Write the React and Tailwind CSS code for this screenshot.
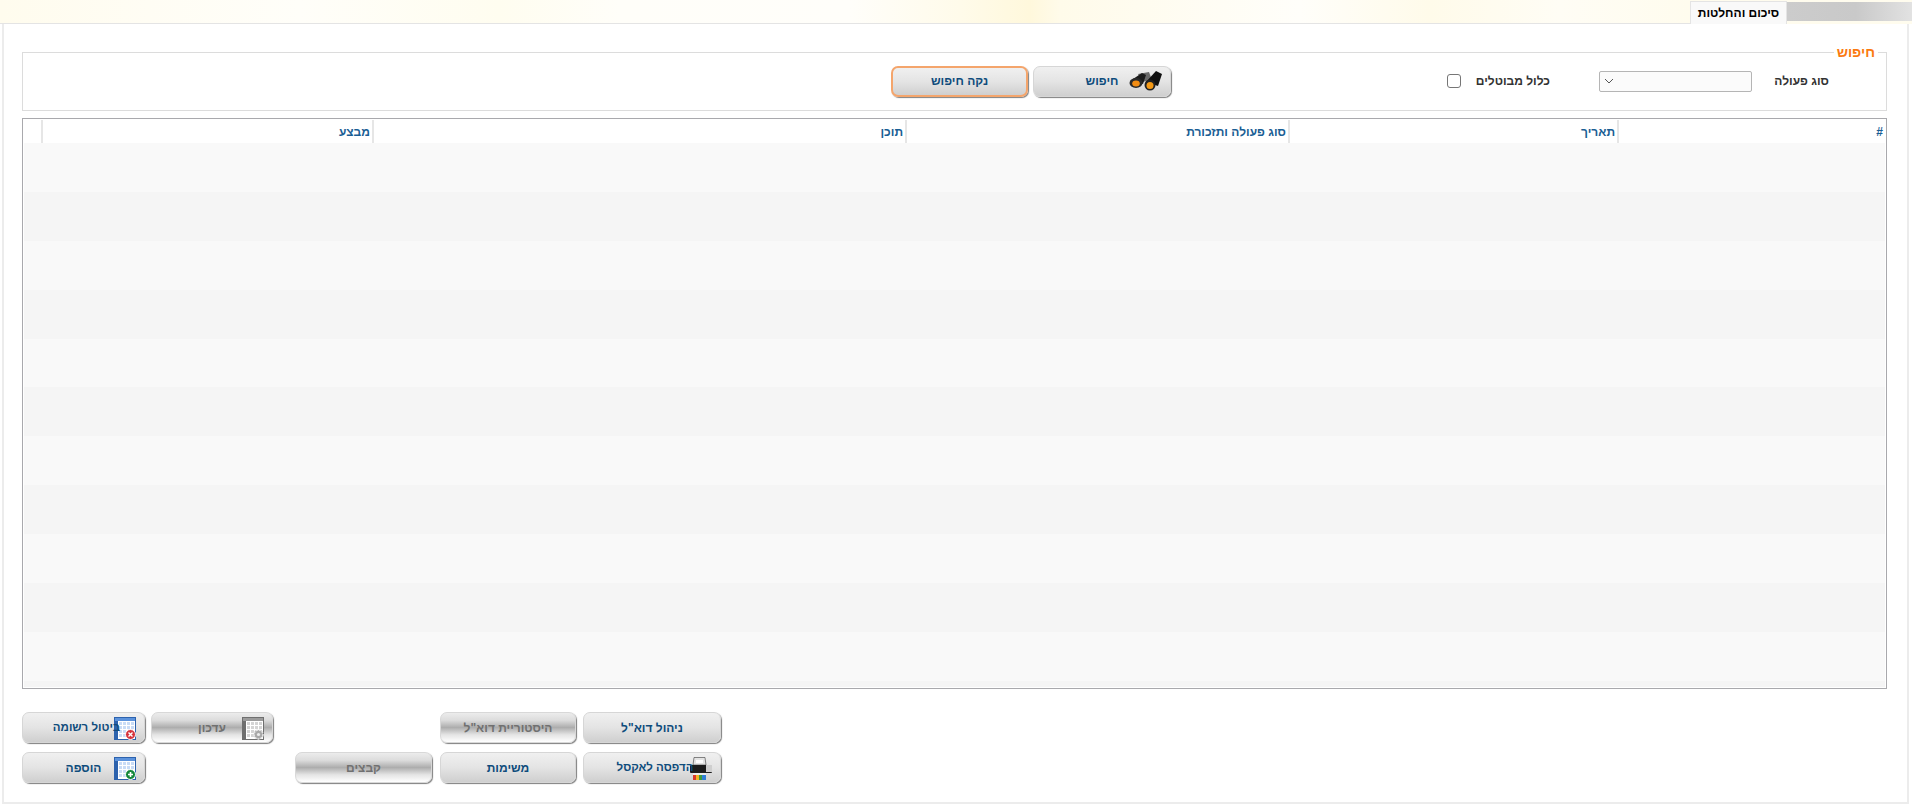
import React from 'react';

const rows = [0, 1, 2, 3, 4, 5, 6, 7, 8, 9, 10, 11];

const columns = [
  { title: '#', width: 'w-[268px]' },
  { title: 'תאריך', width: 'w-[329px]' },
  { title: 'סוג פעולה ותזכורת', width: 'w-[383px]' },
  { title: 'תוכן', width: 'w-[533px]' },
  { title: 'מבצע', width: 'w-[331px]' },
];

const Binoculars = () => (
  <svg width="33" height="20" viewBox="0 0 33 20" className="block">
    <path d="M9 3 L20 1 L23 9 L13 11 Z" fill="#6a6a6a" />
    <path d="M1 10 L13 2 L17 4 L14 13 Z" fill="#1c1c1c" />
    <path d="M17 11 L27 0 L33 3 L29 15 Z" fill="#111111" />
    <ellipse cx="7" cy="12" rx="6.5" ry="5" fill="#2a2a2a" />
    <ellipse cx="7" cy="12.5" rx="3.8" ry="3" fill="#f28c12" />
    <circle cx="21" cy="14" r="5.5" fill="#222222" />
    <circle cx="21" cy="14.5" r="3.5" fill="#f59a16" />
  </svg>
);

const GridIcon = ({ badge, muted }) => {
  const frame = muted ? '#6f6f6f' : '#2d62ad';
  const head = muted ? '#9b9b9b' : '#5c93dc';
  const cell = muted ? '#d4d4d4' : '#c9dcf6';
  return (
    <svg width="22" height="23" viewBox="0 0 22 23" className="block">
      <rect x="0.5" y="0.5" width="21" height="22" fill="#ffffff" stroke={frame} />
      <rect x="1" y="1" width="20" height="3" fill={head} />
      <rect x="1" y="4" width="3" height="18" fill={frame} />
      {[5, 9, 13, 17].map((x) =>
        [5, 9, 13, 17].map((y) => <rect key={`${x}-${y}`} x={x} y={y} width="3" height="3" fill={cell} />)
      )}
      {badge === 'remove' && (
        <>
          <circle cx="16.5" cy="17.5" r="5" fill="#d6343d" stroke="#ffffff" />
          <path d="M14.5 15.5 L18.5 19.5 M18.5 15.5 L14.5 19.5" stroke="#ffffff" strokeWidth="1.4" />
        </>
      )}
      {badge === 'add' && (
        <>
          <circle cx="16.5" cy="17.5" r="5" fill="#14873a" stroke="#ffffff" />
          <path d="M14 17.5 H19 M16.5 15 V20" stroke="#ffffff" strokeWidth="1.6" />
        </>
      )}
      {badge === 'gear' && (
        <>
          <circle cx="16.5" cy="17.5" r="4.5" fill="#a8a8a8" stroke="#e6e6e6" strokeWidth="1.5" strokeDasharray="2 1" />
          <circle cx="16.5" cy="17.5" r="1.6" fill="#ececec" />
        </>
      )}
    </svg>
  );
};

const Printer = () => (
  <svg width="25" height="23" viewBox="0 0 25 23" className="block">
    <path d="M7 0.5 H18 L19 8 H6 Z" fill="#e4e4e4" stroke="#555555" strokeWidth="0.7" />
    <rect x="9" y="3" width="7" height="3" fill="#ffffff" />
    <rect x="3" y="8" width="22" height="8" rx="1" fill="#1d1d1d" />
    <rect x="19" y="8" width="6" height="7" fill="#cfcfcf" />
    <rect x="6" y="16" width="13" height="7" fill="#eeeeee" />
    <rect x="6" y="18" width="3" height="5" fill="#d93a2b" />
    <rect x="9" y="18" width="3" height="5" fill="#f3b521" />
    <rect x="12" y="18" width="3" height="5" fill="#3f9b3f" />
    <rect x="15" y="18" width="4" height="5" fill="#2f7fd6" />
  </svg>
);

const Button = ({ label, icon, disabled, focused, tight, width }) => (
  <div
    className={`${width} h-[31px] flex items-center justify-center relative rounded-[7px] font-bold shadow-[1px_1px_1px_#7f7f7f] ${
      tight ? 'text-[11.5px] pl-[6px]' : 'text-[12px]'
    } ${focused ? 'border-2 border-[#f4a56c]' : 'border'} ${
      disabled
        ? 'bg-[linear-gradient(180deg,#ececec_0%,#dcdcdc_25%,#adadad_50%,#e4e4e4_75%,#ffffff_100%)] border-[#d8d8d8] text-[#707070]'
        : `bg-[linear-gradient(180deg,#f0f0f0_0%,#e4e4e4_50%,#cfcfcf_100%)] text-[#0f4c7c] ${focused ? '' : 'border-[#d6d6d6]'}`
    }`}
  >
    {icon && <span className="absolute right-[8px] top-[4px]">{icon}</span>}
    <span className="relative">{label}</span>
  </div>
);

export default function App() {
  return (
    <div dir="rtl" className="h-[806px] w-[1912px] overflow-hidden flex flex-col bg-white font-['Liberation_Sans',sans-serif] text-[12px]">
      <div className="h-[24px] shrink-0 flex items-end bg-[linear-gradient(90deg,#fffcee_0px,#fffdf4_150px,#fffef9_300px,#fffdf0_500px,#fffef9_620px,#fffefa_850px,#fffbea_960px,#fff8dc_1030px,#fffbea_1060px,#fffefa_1300px,#fffbea_1430px,#fffdf5_1560px,#fffcee_1690px)]">
        <div className="w-[125px] h-[19px] mb-[3px] bg-[linear-gradient(270deg,#e2e2e2_0%,#c9c9c9_45%,#cccccc_100%)]" />
        <div className="w-[97px] h-[23px] bg-[#f9f9f9] border border-b-0 border-[#e4e4e4] flex items-center justify-center font-bold text-[12px] text-black">
          סיכום והחלטות
        </div>
        <div className="flex-1 h-[1px] bg-[#e4e4e4]" />
      </div>

      <div className="flex-1 min-h-0 flex flex-col mr-[3px] ml-[2px] mb-[2px] border-2 border-t-0 border-[#ececec] pr-[20px] pl-[18px]">
        <fieldset className="mt-[19px] h-[68px] shrink-0 border border-[#dcdcdc]">
          <legend className="mr-[8px] px-[3px] h-[18px] leading-[18px] text-[14px] font-bold text-[#fb7a10]">חיפוש</legend>
          <div className="flex items-center h-[48px] pr-[57px] -mt-[4px] text-[12px] font-bold text-[#333333]">
            <span className="w-[55px] ml-[22px] whitespace-nowrap">סוג פעולה</span>
            <div className="w-[153px] h-[21px] ml-[49px] border border-[#b5b5b5] rounded-[2px] bg-[#fbfbfb] flex items-center justify-end pl-[4px]">
              <svg width="10" height="6" viewBox="0 0 10 6">
                <path d="M1 1 L5 5 L9 1" fill="none" stroke="#555555" strokeWidth="1" />
              </svg>
            </div>
            <span className="w-[73px] ml-[16px] whitespace-nowrap">כלול מבוטלים</span>
            <div className="w-[14px] h-[14px] border border-[#767676] rounded-[3px] bg-white ml-[276px]" />
            <Button label="חיפוש" width="w-[138px] ml-[5px]" icon={<Binoculars />} />
            <Button label="נקה חיפוש" width="w-[137px]" focused />
          </div>
        </fieldset>

        <div className="mt-[7px] h-[571px] shrink-0 border border-[#a9a9ad] p-px overflow-hidden">
          <div className="h-full overflow-hidden">
            <div className="flex h-[23px] bg-white">
              {columns.map((col) => (
                <div
                  key={col.title}
                  className={`${col.width} h-full shrink-0 border-l-2 border-[#e6e6e6] pr-[2px] flex items-center font-bold text-[12px] text-[#1a5e94]`}
                >
                  {col.title}
                </div>
              ))}
            </div>
            {rows.map((row) => (
              <div key={row} className={`h-[48.9px] ${row % 2 === 0 ? 'bg-[#f9f9f9]' : 'bg-[#f5f5f5]'}`} />
            ))}
          </div>
        </div>

        <div className="mt-[23px] flex justify-end">
          <div className="grid grid-cols-[145px_144px_159px_128px_123px] grid-rows-[31px_31px] gap-y-[9px]">
            <Button label={'ניהול דוא"ל'} width="w-[138px]" />
            <Button label={'היסטוריית דוא"ל'} width="w-[136px]" disabled />
            <div />
            <Button label="עדכון" width="w-[122px]" disabled icon={<GridIcon badge="gear" muted />} />
            <Button label="ביטול רשומה" width="w-[123px]" tight icon={<GridIcon badge="remove" />} />
            <Button label="הדפסה לאקסל" width="w-[138px]" tight icon={<Printer />} />
            <Button label="משימות" width="w-[136px]" />
            <Button label="קבצים" width="w-[137px]" disabled />
            <div />
            <Button label="הוספה" width="w-[123px]" icon={<GridIcon badge="add" />} />
          </div>
        </div>
      </div>
    </div>
  );
}
